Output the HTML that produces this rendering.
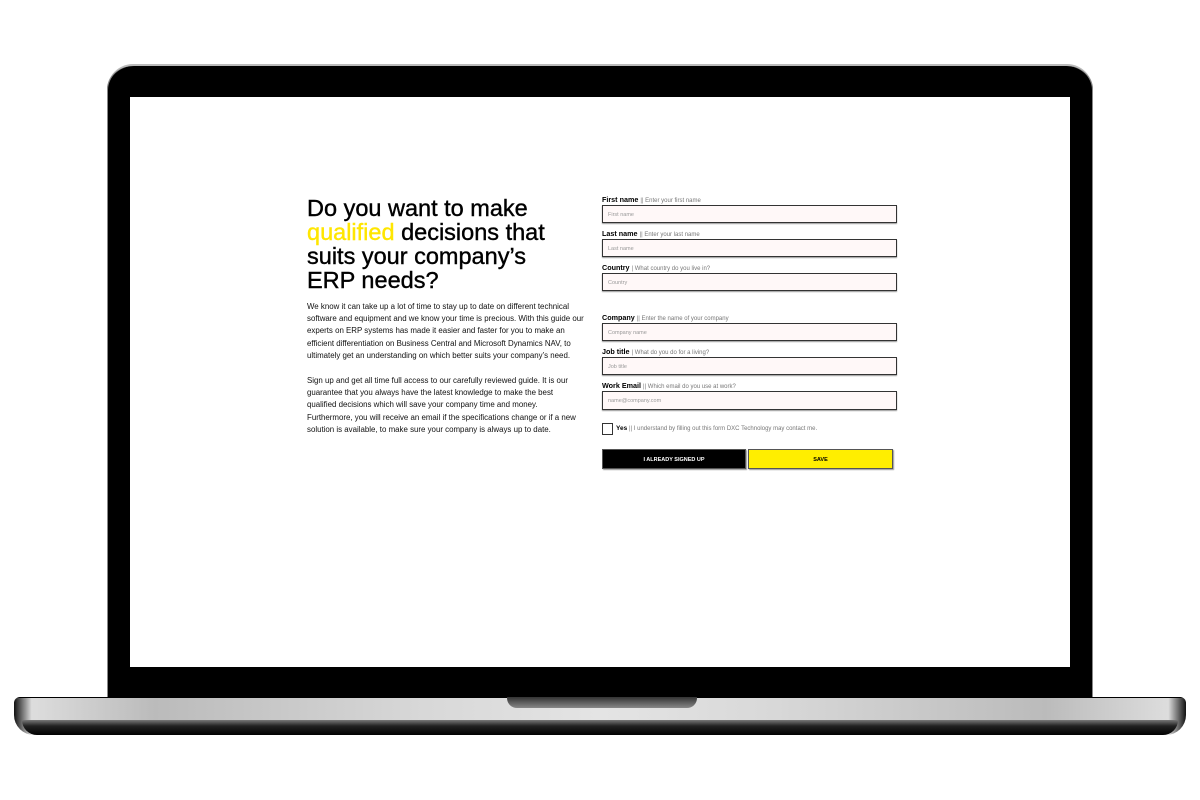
<!DOCTYPE html>
<html><head><meta charset="utf-8"><style>
*{margin:0;padding:0;box-sizing:border-box}
body{width:1200px;height:800px;background:#fff;position:relative;overflow:hidden;font-family:"Liberation Sans",sans-serif}
.abs{position:absolute}
#lid{left:107px;top:64px;width:986px;height:636px;background:#000;border-radius:26px 26px 0 0;border-top:2px solid #bbb;box-shadow:inset 1px 0 0 #888,inset -1px 0 0 #888}
#screen{left:130px;top:97px;width:940px;height:570px;background:#fff}
#base{left:14px;top:697px;width:1172px;height:38px;border-radius:6px 6px 20px 20px;background:linear-gradient(#000 0,#000 2%,transparent 2%),linear-gradient(90deg,#111 0,#ddd 1.5%,#bbb 12%,#d8d8d8 35%,#e4e4e4 50%,#d8d8d8 65%,#bbb 88%,#ddd 98.5%,#111 100%)}
#baseb{left:22px;top:720px;width:1156px;height:15px;background:linear-gradient(#777,#222 40%,#000);border-radius:0 0 20px 20px}
#notch{left:507px;top:697px;width:190px;height:11px;background:linear-gradient(#333,#888);border-radius:0 0 10px 10px}
h1{position:absolute;left:307px;top:196px;font-size:23.5px;line-height:24px;font-weight:400;color:#000;letter-spacing:0;white-space:nowrap;-webkit-text-stroke:0.4px #000}
h1 .y{color:#ffe600;-webkit-text-stroke:0.4px #ffe600}
.p{position:absolute;left:307px;font-size:7.9px;line-height:12.2px;color:#111;white-space:nowrap}
.lab{position:absolute;left:602px;font-size:7.2px;color:#000;font-weight:bold;white-space:nowrap}
.lab span{font-weight:normal;color:#777;font-size:6px}
.in{position:absolute;left:602px;width:295px;height:18px;background:#fff8f8;border:1px solid #333;box-shadow:0 1px 1px #999;font-size:5.5px;color:#999;padding:6px 0 0 5px}
.btn{position:absolute;top:449px;height:20px;font-size:5.5px;font-weight:bold;text-align:center;line-height:20px;border:1px solid #555;box-shadow:1px 1px 1px #999}
</style></head><body>
<div class="abs" id="lid"></div>
<div class="abs" id="screen"></div>
<div class="abs" id="base"></div>
<div class="abs" id="baseb"></div>
<div class="abs" id="notch"></div>

<h1>Do you want to make<br><span class="y">qualified</span> decisions that<br>suits your company’s<br>ERP needs?</h1>

<div class="p" style="top:301px">We know it can take up a lot of time to stay up to date on different technical<br>software and equipment and we know your time is precious. With this guide our<br>experts on ERP systems has made it easier and faster for you to make an<br>efficient differentiation on Business Central and Microsoft Dynamics NAV, to<br>ultimately get an understanding on which better suits your company’s need.</div>
<div class="p" style="top:375px">Sign up and get all time full access to our carefully reviewed guide. It is our<br>guarantee that you always have the latest knowledge to make the best<br>qualified decisions which will save your company time and money.<br>Furthermore, you will receive an email if the specifications change or if a new<br>solution is available, to make sure your company is always up to date.</div>

<div class="lab" style="top:195px">First name <span>|| Enter your first name</span></div>
<div class="in" style="top:205px">First name</div>
<div class="lab" style="top:229px">Last name <span>|| Enter your last name</span></div>
<div class="in" style="top:239px">Last name</div>
<div class="lab" style="top:263px">Country <span>| What country do you live in?</span></div>
<div class="in" style="top:273px">Country</div>
<div class="lab" style="top:313px">Company <span>|| Enter the name of your company</span></div>
<div class="in" style="top:323px">Company name</div>
<div class="lab" style="top:347px">Job title <span>| What do you do for a living?</span></div>
<div class="in" style="top:357px">Job title</div>
<div class="lab" style="top:381px">Work Email <span>|| Which email do you use at work?</span></div>
<div class="in" style="top:391px;height:19px">name@company.com</div>

<div class="abs" style="left:602px;top:423px;width:11px;height:12px;border:1px solid #333;background:#fff"></div>
<div class="lab" style="left:616px;top:425px;font-size:6.5px">Yes <span>|| I understand by filling out this form DXC Technology may contact me.</span></div>

<div class="btn" style="left:602px;width:144px;background:#000;color:#fff">I ALREADY SIGNED UP</div>
<div class="btn" style="left:748px;width:145px;background:#ffee00;color:#000">SAVE</div>
</body></html>
